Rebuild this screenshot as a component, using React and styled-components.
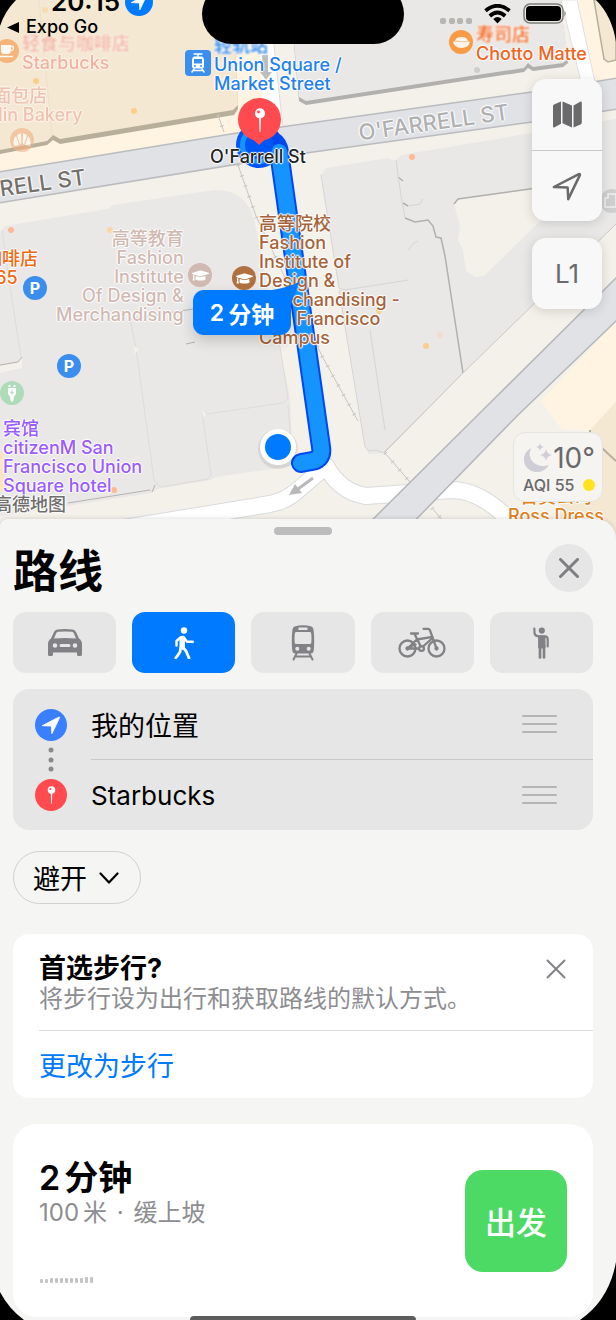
import React from "react";
import styled, { createGlobalStyle, css } from "styled-components";
import { FaGraduationCap } from "react-icons/fa";

const GlobalStyle = createGlobalStyle`
  *, *::before, *::after { box-sizing: border-box; }
  body {
    margin: 0;
    background: #000;
    font-family: Inter, "Noto Sans CJK SC", sans-serif;
    color: #000;
  }
  h1, h2, p, ul, dl { margin: 0; padding: 0; }
  ul { list-style: none; }
  button { font: inherit; border: 0; padding: 0; background: none; color: inherit; cursor: pointer; }
  svg { display: block; flex: none; }
`;

const Screen = styled.div`
  position: relative;
  min-height: 100vh;
  overflow: hidden;
  display: flex;
  flex-direction: column;
  background: #f5f5f4;
`;

/* ---------- map ---------- */

const MapArea = styled.section`
  position: relative;
  height: 540px;
  overflow: hidden;
  background: #f4f1ea;
`;

const MapDrawing = styled.svg`
  position: absolute;
  top: 0;
  left: 0;
`;

const halo = css`
  text-shadow: 0 0 2px #fff, 1px 0 1px #fff, -1px 0 1px #fff, 0 1px 1px #fff, 0 -1px 1px #fff;
`;

const PlaceLabel = styled.div`
  position: absolute;
  left: ${(p) => p.$x}px;
  top: ${(p) => p.$y}px;
  color: ${(p) => p.$color};
  opacity: ${(p) => p.$fade || 1};
  text-align: ${(p) => p.$align || "left"};
  font-size: 18px;
  line-height: 19px;
  font-weight: 500;
  white-space: nowrap;
  ${halo}
`;

const Blurred = styled.span`
  filter: blur(1px);
`;

const StreetLabel = styled.div`
  position: absolute;
  left: ${(p) => p.$x}px;
  top: ${(p) => p.$y}px;
  color: ${(p) => p.$color};
  font-size: 22px;
  line-height: 24px;
  font-weight: 500;
  white-space: nowrap;
  transform: rotate(-8deg);
  ${halo}
`;

const Poi = styled.div`
  position: absolute;
  left: ${(p) => p.$x}px;
  top: ${(p) => p.$y}px;
  width: ${(p) => (p.$square ? 26 : 24)}px;
  height: ${(p) => (p.$square ? 26 : 24)}px;
  border-radius: ${(p) => (p.$square ? 4 : 12)}px;
  display: grid;
  place-items: center;
  background: ${(p) => p.$color};
  opacity: ${(p) => p.$fade || 1};
  color: #fff;
  font-size: 16px;
  font-weight: 700;
`;

const TimeBubble = styled.div`
  position: absolute;
  left: 193px;
  top: 290px;
  width: 98px;
  height: 45px;
  border-radius: 11px;
  display: flex;
  align-items: center;
  justify-content: center;
  background: #007aff;
  color: #fff;
  font-size: 23px;
  font-weight: 600;
  box-shadow: 0 6px 14px rgba(0, 0, 0, 0.16);
`;

const BubbleTail = styled.svg`
  position: absolute;
  right: -9px;
  top: -8px;
`;

/* figure set slightly apart from the unit that follows it */
const Figure = styled.span`
  margin-right: 4px;
`;

const Controls = styled.div`
  position: absolute;
  top: 79px;
  right: 14px;
  display: flex;
  flex-direction: column;
  gap: 17px;
`;

const ControlGroup = styled.div`
  width: 70px;
  border-radius: 14px;
  background: #f8f8f8;
  box-shadow: 0 2px 12px rgba(0, 0, 0, 0.14);
`;

const ControlButton = styled.button`
  width: 100%;
  height: 71px;
  display: grid;
  place-items: center;
  color: #6a6a6c;
  font-size: 26px;
  & + & {
    border-top: 1px solid #c8c8c9;
  }
`;

const Weather = styled.div`
  position: absolute;
  top: 432px;
  right: 13px;
  width: 90px;
  height: 70px;
  padding: 9px 7px 0 9px;
  border-radius: 12px;
  border: 1px solid #e6e4df;
  background: #f6f4f0;
  color: #69696b;
`;

const Temperature = styled.div`
  display: flex;
  align-items: center;
  justify-content: space-between;
  font-size: 28px;
  line-height: 32px;
`;

const AirQuality = styled.div`
  display: flex;
  align-items: center;
  justify-content: space-between;
  font-size: 16px;
  line-height: 22px;
  font-weight: 500;
`;

const AqiDot = styled.span`
  width: 12px;
  height: 12px;
  border-radius: 6px;
  background: #ffe31f;
`;

/* ---------- status bar ---------- */

const StatusLeft = styled.div`
  position: absolute;
  left: 7px;
  top: -15px;
  display: flex;
  flex-direction: column;
`;

const Clock = styled.div`
  display: flex;
  align-items: center;
  gap: 5px;
  padding-left: 44px;
  font-size: 26px;
  line-height: 33px;
  font-weight: 600;
`;

const LocationBadge = styled.span`
  width: 28px;
  height: 28px;
  border-radius: 14px;
  display: grid;
  place-items: center;
  background: #007aff;
`;

const BackToApp = styled.a`
  display: flex;
  align-items: center;
  gap: 7px;
  color: #000;
  font-size: 18px;
  line-height: 18px;
  font-weight: 500;
  text-decoration: none;
`;

const Island = styled.div`
  position: absolute;
  top: -16px;
  left: calc(50% - 106px);
  width: 202px;
  height: 60px;
  border-radius: 30px;
  background: #000;
`;

const StatusRight = styled.div`
  position: absolute;
  top: 3px;
  right: 49px;
  display: flex;
  align-items: center;
  gap: 12px;
`;

/* ---------- sheet ---------- */

const Sheet = styled.main`
  position: relative;
  flex: 1;
  margin-top: -21px;
  padding: 8px 23px 3px 13px;
  border-radius: 8px 20px 0 0;
  background: #f5f5f4;
  box-shadow: 0 0 5px rgba(0, 0, 0, 0.16);
  display: flex;
  flex-direction: column;
`;

const Grabber = styled.div`
  align-self: center;
  width: 58px;
  height: 8px;
  border-radius: 4px;
  background: #bcbcbd;
`;

const SheetHeader = styled.header`
  display: flex;
  align-items: flex-start;
  justify-content: space-between;
  height: 77px;
  padding-top: 9px;
`;

const Title = styled.h1`
  font-size: 45px;
  line-height: 56px;
  font-weight: 700;
`;

const CloseButton = styled.button`
  width: 48px;
  height: 48px;
  border-radius: 24px;
  display: grid;
  place-items: center;
  background: #e6e6e6;
  color: #7f7f83;
`;

const Modes = styled.div`
  display: grid;
  grid-template-columns: repeat(5, 1fr);
  gap: 16px;
  margin-bottom: 16px;
`;

const ModeButton = styled.button`
  height: 61px;
  border-radius: 13px;
  display: grid;
  place-items: center;
  background: ${(p) => (p.$active ? "#007aff" : "#e6e6e6")};
  color: ${(p) => (p.$active ? "#fff" : "#828286")};
`;

const Stops = styled.ul`
  position: relative;
  border-radius: 16px;
  background: #e6e6e6;
  margin-bottom: 21px;
`;

const Stop = styled.li`
  display: flex;
  align-items: center;
  gap: 24px;
  padding-left: 22px;
`;

const StopBadge = styled.span`
  width: 32px;
  height: 32px;
  border-radius: 16px;
  display: grid;
  place-items: center;
  background: ${(p) => p.$color};
`;

const StopBody = styled.div`
  flex: 1;
  display: flex;
  align-items: center;
  justify-content: space-between;
  height: ${(p) => (p.$divided ? 71 : 70)}px;
  padding-right: 36px;
  border-bottom: ${(p) => (p.$divided ? "1px solid #c9c9ca" : "0")};
`;

const StopName = styled.span`
  font-size: 27px;
  &:lang(en) {
    font-size: 26px;
  }
`;

const StopLink = styled.svg`
  position: absolute;
  left: 22px;
  top: 58px;
`;

const DragHandle = styled.button`
  width: 35px;
  height: 18px;
  display: flex;
  flex-direction: column;
  justify-content: space-between;
`;

const DragLine = styled.span`
  height: 2px;
  border-radius: 1px;
  background: #b5b5b7;
`;

const AvoidButton = styled.button`
  align-self: flex-start;
  display: flex;
  align-items: center;
  gap: 12px;
  height: 53px;
  padding: 0 21px 0 19px;
  border: 1px solid #d0d0d2;
  border-radius: 27px;
  font-size: 27px;
  margin-bottom: 30px;
`;

const Card = styled.section`
  border-radius: 16px;
  background: #fff;
  padding-left: 26px;
  margin-bottom: ${(p) => p.$gap}px;
`;

const TipTop = styled.div`
  display: flex;
  justify-content: space-between;
  align-items: flex-start;
  height: 97px;
  padding: 18px 27px 0 0;
  border-bottom: 1px solid #dcdcde;
`;

const TipTitle = styled.h2`
  font-size: 27px;
  line-height: 33px;
  font-weight: 700;
`;

const Muted = styled.p`
  color: #8d8d91;
  font-size: 24px;
  line-height: 28px;
`;

const Separator = styled.span`
  margin: 0 3px;
`;

const DismissButton = styled.button`
  width: 20px;
  height: 20px;
  margin-top: 7px;
  color: #828286;
`;

const TipAction = styled.button`
  height: 67px;
  color: #007aff;
  font-size: 27px;
`;

const RouteCard = styled(Card)`
  display: flex;
  justify-content: space-between;
  align-items: center;
  height: 193px;
  padding-right: 26px;
  border-radius: 24px;
`;

const RouteInfo = styled.div`
  display: flex;
  flex-direction: column;
  height: 100%;
  padding: 32px 0 34px;
`;

const Duration = styled.h2`
  font-size: 34px;
  line-height: 43px;
  font-weight: 600;
`;

const Elevation = styled.div`
  display: flex;
  gap: 2px;
  align-items: flex-end;
  margin: auto 0 0 1px;
`;

const ElevationBar = styled.span`
  width: 3px;
  height: ${(p) => p.$h}px;
  border-radius: 1px;
  background: #c4c4c6;
`;

const GoButton = styled.button`
  width: 102px;
  height: 102px;
  border-radius: 18px;
  background: #4cd964;
  color: #fff;
  font-size: 31px;
  font-weight: 500;
`;

const HomeBar = styled.div`
  position: absolute;
  left: calc(50% - 118px);
  bottom: 0;
  width: 226px;
  height: 4px;
  border-radius: 4px 4px 0 0;
  background: #5c5c5c;
`;

const Corner = styled.svg`
  position: absolute;
  pointer-events: none;
  ${(p) => p.$v}: 0;
  ${(p) => p.$h}: 0;
`;

/* ---------- drawings ---------- */

const Arrow = ({ size, fill = "none", stroke = "none", strokeWidth = 0 }) => (
  <svg width={size} height={size} viewBox="0 0 24 24" fill={fill} stroke={stroke} strokeWidth={strokeWidth} strokeLinejoin="round">
    <path d="M1.500 12.800 21.500 2.500Q22.500 2.300 22.300 3.300L13 22.500 12.500 13.200Z" />
  </svg>
);

const MapIcon = () => (
  <svg width="29" height="27" viewBox="0 0 29 27" fill="currentColor">
    <path d="M0 5Q0 4 1 3.500L8 .4V22.800L1.600 26.200Q0 27 0 25.400ZM9.500 .4 19 4.400V26.400L9.500 22.200ZM20.500 4.400 27.200.800Q28.800 0 28.800 1.800V21.600Q28.800 22.800 28 23.200L20.500 26.500Z" />
  </svg>
);

const Cross = ({ size, width }) => (
  <svg width={size} height={size} viewBox="0 0 20 20" fill="none" stroke="currentColor" strokeWidth={width} strokeLinecap="round">
    <path d="M1.500 1.500 18.500 18.500M18.500 1.500 1.500 18.500" />
  </svg>
);

const CarIcon = () => (
  <svg width="34" height="27" viewBox="0 0 34 27" fill="currentColor" fillRule="evenodd">
    <path d="M3 9.500 6 3Q7 .8 9.500.500Q17-.300 24.500.500Q27 .8 28 3L31 9.500Q34 11.500 34 15V25.500Q34 27 32.500 27H30.500Q29 27 29 25.500V23.500H5V25.500Q5 27 3.500 27H1.500Q0 27 0 25.500V15Q0 11.500 3 9.500ZM6 9.500Q17 8.300 28 9.500L25.800 4.200Q25.300 3 24 2.800Q17 2.200 10 2.800Q8.700 3 8.200 4.200ZM7 14.200A2.300 2.300 0 1 0 7 18.800A2.300 2.300 0 1 0 7 14.200ZM27 14.200A2.300 2.300 0 1 0 27 18.800A2.300 2.300 0 1 0 27 14.200ZM13 15A1.500 1.500 0 0 0 13 18H21A1.500 1.500 0 0 0 21 15Z" />
  </svg>
);

const WalkIcon = () => (
  <svg width="20" height="32" viewBox="0 0 20 32" fill="none" stroke="currentColor" strokeLinecap="round" strokeLinejoin="round">
    <circle cx="10" cy="3.500" r="3.200" fill="currentColor" stroke="none" />
    <path d="M8.200 11.500V20" strokeWidth="5.500" />
    <path d="M6.500 10.500 2.500 14V18.500M9.500 10 13 14.800H18.800" strokeWidth="2.400" />
    <path d="M9 20.500 12 24 15 31M6.600 21 6 25 1.800 31" strokeWidth="2.800" />
  </svg>
);

const TrainIcon = () => (
  <svg width="24" height="36" viewBox="0 0 24 36" fill="currentColor" fillRule="evenodd">
    <path d="M3.500 1.500Q12-1 20.500 1.500Q22.300 2.200 22.600 5Q23.700 15 22.800 25Q22.500 28.500 19.500 28.500H4.500Q1.500 28.500 1.200 25Q.300 15 1.400 5Q1.700 2.200 3.500 1.500ZM7.500 2.600V5H16.500V2.600ZM5 7Q4 7 3.800 8.500Q3.300 13 3.700 17.500Q3.800 19 5 19H19Q20.200 19 20.300 17.500Q20.700 13 20.200 8.500Q20 7 19 7ZM6.300 21.700A2 2 0 1 0 6.300 25.700A2 2 0 1 0 6.300 21.700ZM17.700 21.700A2 2 0 1 0 17.700 25.700A2 2 0 1 0 17.700 21.700Z" />
    <path d="M5.500 28.500 2.500 34.500M18.500 28.500 21.500 34.500M4.500 31.500H19.500" fill="none" stroke="currentColor" strokeWidth="2" strokeLinecap="round" />
  </svg>
);

const BikeIcon = () => (
  <svg width="48" height="31" viewBox="0 0 48 31" fill="none" stroke="currentColor" strokeWidth="2.300" strokeLinecap="round" strokeLinejoin="round">
    <circle cx="9.500" cy="21.500" r="8" />
    <circle cx="38.500" cy="21.500" r="8" />
    <circle cx="9.500" cy="21.500" r="1" fill="currentColor" />
    <circle cx="38.500" cy="21.500" r="1" fill="currentColor" />
    <circle cx="23.500" cy="21.500" r="2.400" />
    <path d="M13 6.500H20M16.300 6.500 22.800 19.500M9.500 21.500 18.800 12.500 34.500 9.800M9.500 21.500H21M10 20.500 17.500 17.500M25 19.500 34 11.500M25.500 1.800H30Q31.500 1.800 32 3.300L38.500 21.500" />
  </svg>
);

const HailIcon = () => (
  <svg width="16" height="32" viewBox="0 0 16 32" fill="none" stroke="currentColor" strokeLinecap="round" strokeLinejoin="round">
    <circle cx="8.800" cy="3.600" r="3.100" fill="currentColor" stroke="none" />
    <path d="M1.300 1.500 1.600 6.500Q2 9 6.500 9.400H12Q14.500 9.600 14.700 12V19.500" strokeWidth="2.200" />
    <path d="M6 9H12V21H6Z" fill="currentColor" strokeWidth="1" />
    <path d="M7 18V30.500M11 18V30.500" strokeWidth="2.700" />
  </svg>
);

const PinGlyph = ({ height }) => (
  <svg width={height / 2} height={height} viewBox="0 0 10 20">
    <path d="M4.200 8H5.800L5.400 19.500Q5 20.500 4.600 19.500Z" fill="#fff" />
    <circle cx="5" cy="4.500" r="4.200" fill="#fff" />
    <circle cx="3.800" cy="3.300" r="1.200" fill="#ff4b50" />
  </svg>
);

const TramGlyph = () => (
  <svg width="16" height="20" viewBox="0 0 16 20" fill="none" stroke="#fff" strokeWidth="1.500" strokeLinecap="round">
    <path d="M4 1H12M8 1V4M4 16 2 19M12 16 14 19M4 17.500H12" />
    <path fill="#fff" stroke="none" fillRule="evenodd" d="M4 3.500H12Q14 4 14 7V13Q14 15.500 11.500 15.500H4.500Q2 15.500 2 13V7Q2 4 4 3.500ZM4 6V10.500H12V6ZM5 12A1 1 0 1 0 5 14A1 1 0 1 0 5 12ZM11 12A1 1 0 1 0 11 14A1 1 0 1 0 11 12Z" />
  </svg>
);

const CupGlyph = () => (
  <svg width="15" height="14" viewBox="0 0 15 14" fill="#fff">
    <path d="M1 1H11V6Q11 10 7.500 10H4.500Q1 10 1 6Z" />
    <path d="M11 2.500H13Q14.500 5 11 7M0 12.500H13" fill="none" stroke="#fff" strokeWidth="1.300" />
  </svg>
);

const BowlGlyph = () => (
  <svg width="17" height="11" viewBox="0 0 17 11" fill="#fff">
    <path d="M2 4Q3 0 8.500 0Q14 0 15 4ZM0 4.500H17Q16 11 8.500 11Q1 11 0 4.500Z" opacity=".9" />
  </svg>
);

const CroissantGlyph = () => (
  <svg width="18" height="14" viewBox="0 0 18 14" fill="#fff">
    <path d="M1 13Q-1 6 3 3L6 12ZM4 2.500Q6 0 8 .500L8.300 10 7 11.500ZM10 .500Q12 0 14 2.500L11 11.500 9.700 10ZM15 3Q19 6 17 13L12 12Z" />
  </svg>
);

const PlugGlyph = () => (
  <svg width="10" height="17" viewBox="0 0 10 17" fill="#fff">
    <path d="M1.500 0H3.500V2H1.500ZM6.500 0H8.500V2H6.500ZM1 3H9V8Q9 10.500 7 11.500L6.300 16Q5 17.500 3.700 16L3 11.500Q1 10.500 1 8Z" />
    <path d="M5.800 4 3 8H4.700L4.200 10.500 7 7H5.300Z" fill="#aedcb9" />
  </svg>
);

const MoonIcon = () => (
  <svg width="29" height="30" viewBox="0 0 29 30" fill="#cfced6">
    <path d="M8 5Q4 14 11 20Q17 25 26 22Q21 30 12 29Q2 27 1 18Q0 9 8 5Z" />
    <path d="M17 0Q17.500 3.500 21 4Q17.500 4.500 17 8Q16.500 4.500 13 4Q16.500 3.500 17 0ZM23 6Q23.700 11 29 12Q23.700 13 23 18Q22.300 13 17 12Q22.300 11 23 6Z" />
  </svg>
);

const WifiIcon = () => (
  <svg width="27" height="20" viewBox="0 0 27 20" fill="none" stroke="#000" strokeWidth="3.800">
    <path d="M1.500 6.800Q13.500-3.200 25.500 6.800M5.800 12Q13.500 5 21.200 12" />
    <path d="M9.300 15Q13.500 11.200 17.700 15L13.500 19.500Z" fill="#000" stroke="none" />
  </svg>
);

const BatteryIcon = () => (
  <svg width="44" height="22" viewBox="0 0 44 22">
    <rect x="1" y="1" width="39" height="19" rx="6" fill="none" stroke="#7e7c78" strokeWidth="1.500" />
    <rect x="3" y="3" width="35" height="15" rx="4" />
    <path d="M41.500 7.500Q44 10.500 41.500 13.500Z" fill="#7e7c78" />
  </svg>
);

const SignalDots = () => (
  <svg width="32" height="20" viewBox="0 0 32 20" fill="#b8b6b3">
    {[0, 9, 17, 26].map((x) => (
      <rect key={x} x={x} y="14" width="6" height="6" rx="2" />
    ))}
  </svg>
);

const Streets = () => (
  <MapDrawing width="616" height="540" viewBox="0 0 616 540" aria-hidden="true">
    {/* shopping district, north-west */}
    <path d="M0 0H262L264 130 0 175Z" fill="#fef4e1" />
    <path d="M0 0H233L238 109 234 115 60 144 53 140 47 145 0 154Z" fill="#b8af9b" />
    <path d="M0 0H233L238 105 233 110 60 139 53 135 47 141 0 150Z" fill="#f4e8d3" />
    <path d="M39 0 52 135" stroke="#ece0c9" />
    {/* white side streets on the north side */}
    <path d="M257 0H269L283 130 265 132Z" fill="#fff" />
    <path d="M269 0 283 128" stroke="#dddcd9" />
    <path d="M262 55H268V72H272L266 80 260 72H263Z" fill="#bdbdbd" />
    <path d="M290 0H560L568 63 563 67 533 71 528 68 524 72 306 105 299 101Z" fill="#b1b0ae" />
    <path d="M290 0H560L568 59 563 63 533 67 528 63 524 68 306 101 299 97Z" fill="#e9e8e7" />
    <path d="M561 0H577L595 82H581Z" fill="#fff" stroke="#e1e0de" />
    <path d="M578 0H616V84H596Z" fill="#fef4e1" />
    <path d="M594 0 604 59 608 62 616 60V0Z" fill="#f4e8d3" stroke="#b8af9b" strokeWidth="1.500" />

    {/* west block */}
    <path d="M0 233 5 226 108 209 113 205 215 190Q246 190 254 219L290 398 293 466 215 477 211 480 158 489 152 493 0 516Z" fill="#e9e8e7" />
    <path d="M0 366 18 362 22 357V368L0 373Z" fill="#f4f1ea" />
    <path d="M0 365 18 362 22 357M152 492 155 485M68 503 150 490M130 319 193 309M186 344 195 342" fill="none" stroke="#b4b3b1" />
    <path d="M2 230Q10 290 21 356M130 319 136 348 154 480 160 487 208 479 211 474 202 412 207 414 283 403 288 398 278 335M288 405 293 466" fill="none" stroke="#dddcd9" />
    <path d="M134 346 139 349 135 354ZM202 410 206 414 203 418Z" fill="#f4f1ea" />
    <path d="M0 450 4 455V490L0 492Z" fill="#fbe5c2" />

    {/* middle block */}
    <path d="M321 175 326 168 388 158 395 161 401 155 616 119V236L463 373 384 453 369 454 365 447 339 288Z" fill="#e9e8e7" />
    <path d="M454 204 459 199 580 182 484 276 475 277 466 271 463 250 458 240 460 226Z" fill="#f4f1ea" />
    <path d="M454 204 458 199 580 182M398 177 403 181M403 203 408 206M405 218 415 222 428 220 433 226 436 237 441 238 445 256 463 373" fill="none" stroke="#b1b0ae" strokeWidth="1.500" />
    <path d="M321 175 339 288 345 290 408 280M339 290 365 447 369 451 376 450 384 453M396 160 401 196 405 218M408 206 420 204 423 199M408 250 414 243 418 241M384 452 463 373M370 330 385 430" fill="none" stroke="#d6d5d3" />
    <path d="M463 373 616 224V236L484 354Z" fill="#f4f1ea" />

    {/* south-east corner */}
    <path d="M463 373 616 224V540H300L384 453Z" fill="#f4f1ea" />
    <path d="M384 453 463 373 616 224" fill="none" stroke="#c9c8c5" />
    <path d="M541 401 616 322V402L590 430H562Z" fill="#fef4e1" />
    <path d="M590 430 616 402V540H560L560 500 590 500Z" fill="#f4e8d3" />
    <path d="M602 448 616 461M590 430V440" stroke="#b8af9b" strokeWidth="2" />

    {/* white streets along the south */}
    <g fill="none" strokeLinejoin="round">
      <path d="M100 532 270 504Q286 501 298 490L326 466Q340 492 366 496L452 490Q486 490 524 536" stroke="#d9dbdc" strokeWidth="18" />
      <path d="M100 532 270 504Q286 501 298 490L326 466Q340 492 366 496L452 490Q486 490 524 536" stroke="#fff" strokeWidth="16" />
    </g>
    <path d="M313 478 298 489" stroke="#b9b9b9" strokeWidth="3" />
    <path d="M289 495 295 484 302 493Z" fill="#b9b9b9" />

    {/* main roads */}
    <path d="M-2 172 237 133 532 92 618 78V109L532 122 306 153 -2 203Z" fill="#e0e2e6" stroke="#b9bbbe" strokeWidth="1.500" />
    <path d="M352 540 496 397 618 276V319L518 415 396 540Z" fill="#e0e2e6" stroke="#b4b6ba" strokeWidth="1.500" />

    {/* tram line */}
    <g fill="none" stroke="#c6c5c2">
      <path d="M218 115 224 132M238 165 256 216 322 356 358 421M385 453 410 482M432 508 444 522" />
      <path d="M218 115 224 132M238 165 256 216 322 356 358 421M385 453 410 482M432 508 444 522" strokeWidth="4" strokeDasharray="1 10" />
    </g>

    {/* small place dots */}
    {[
      [36, 81, "#fbcf8b"], [134, 111, "#fbcf8b"], [11, 230, "#fdba94"], [110, 230, "#fbd6a1"],
      [412, 157, "#fdba94"], [477, 70, "#cfcecd"], [379, 311, "#fbcf8b"], [426, 346, "#fbcf8b"],
      [440, 335, "#f1ddd0"], [114, 490, "#fdb98f"], [45, 10, "#f8dcae"],
    ].map(([x, y, c]) => (
      <circle key={`${x}-${y}`} cx={x} cy={y} r="3" fill={c} />
    ))}
    <circle cx="612" cy="201" r="12" fill="#cfcfcf" />
    <path d="M605 207V198H608V194H616V207Z" fill="none" stroke="#f1f1f1" strokeWidth="1.500" />

    {/* walking route */}
    <circle cx="259" cy="145" r="23" fill="#0056f5" />
    <circle cx="259" cy="145" r="16" fill="none" stroke="#1593ff" strokeWidth="6" />
    <g fill="none" strokeLinecap="round" strokeLinejoin="round">
      <path d="M262 141Q276 137 279 152L321 447Q323 459 312 461L301 463" stroke="#0047f0" strokeWidth="20" />
      <path d="M279 152 321 447Q323 459 312 461L301 463" stroke="#1593ff" strokeWidth="16" />
    </g>
    <circle cx="259" cy="145" r="14" fill="#0056f5" />
  </MapDrawing>
);

const Markers = styled.svg`
  position: absolute;
  left: 0;
  top: 0;
`;

const DestinationPin = styled.div`
  position: absolute;
  left: 238px;
  top: 98px;
  width: 43px;
  height: 43px;
  border-radius: 22px;
  display: grid;
  place-items: center;
  background: #ff4b50;
`;

const modes = [
  ["驾车", <CarIcon />],
  ["步行", <WalkIcon />],
  ["公共交通", <TrainIcon />],
  ["骑行", <BikeIcon />],
  ["打车", <HailIcon />],
];

const Handle = () => (
  <DragHandle aria-label="重新排序">
    <DragLine />
    <DragLine />
    <DragLine />
  </DragHandle>
);

export default function App() {
  return (
    <Screen>
      <GlobalStyle />
      <MapArea aria-label="地图">
        <Streets />

        <Poi $x={-5} $y={39} $color="#f7a35c" $fade={0.75}><CupGlyph /></Poi>
        <PlaceLabel $x={22} $y={34} $color="#f08d7c" $fade={0.6}><Blurred>轻食与咖啡店</Blurred><br />Starbucks</PlaceLabel>
        <PlaceLabel $x={-42} $y={86} $color="#eda292" $fade={0.55} $align="center">面包店<br />Boudin Bakery</PlaceLabel>
        <Poi $x={10} $y={128} $color="#f3b184" $fade={0.6}><CroissantGlyph /></Poi>

        <Poi $x={185} $y={50} $color="#3a8eee" $square><TramGlyph /></Poi>
        <PlaceLabel $x={214} $y={36} $color="#2381ea"><Blurred>轻轨站</Blurred><br />Union Square /<br />Market Street</PlaceLabel>

        <Poi $x={449} $y={30} $color="#f99b45"><BowlGlyph /></Poi>
        <PlaceLabel $x={476} $y={25} $color="#f0641e"><Blurred>寿司店</Blurred><br />Chotto Matte</PlaceLabel>

        <StreetLabel $x={358} $y={110} $color="#b0b0b1">O'FARRELL ST</StreetLabel>
        <StreetLabel $x={-65} $y={175} $color="#74716c">O'FARRELL ST</StreetLabel>

        <PlaceLabel $x={-16} $y={249} $color="#f06a12">咖啡店<br />365</PlaceLabel>
        <Poi $x={23} $y={276} $color="#3a8eee">P</Poi>
        <Poi $x={57} $y={354} $color="#3a8eee">P</Poi>
        <Poi $x={0} $y={381} $color="#aedcb9"><PlugGlyph /></Poi>

        <PlaceLabel $x={56} $y={229} $color="#d0b9b1" $align="right">
          高等教育<br />Fashion<br />Institute<br />Of Design &amp;<br />Merchandising
        </PlaceLabel>
        <Poi $x={188} $y={263} $color="#d0b9b1"><FaGraduationCap size={17} /></Poi>
        <Poi $x={232} $y={266} $color="#b1703f"><FaGraduationCap size={17} /></Poi>
        <PlaceLabel $x={259} $y={214} $color="#a5633a">
          高等院校<br />Fashion<br />Institute of<br />Design &amp;<br />Merchandising -<br />San Francisco<br />Campus
        </PlaceLabel>

        <PlaceLabel $x={3} $y={419} $color="#9a5bff">
          宾馆<br />citizenM San<br />Francisco Union<br />Square hotel
        </PlaceLabel>
        <PlaceLabel $x={-6} $y={495} $color="#6f6e6c">高德地图</PlaceLabel>
        <PlaceLabel $x={508} $y={487} $color="#df8220" $align="center">百货公司<br />Ross Dress</PlaceLabel>

        <Markers width="616" height="540" viewBox="0 0 616 540" aria-hidden="true">
          <circle cx="278" cy="449" r="20" fill="#000" opacity=".08" />
          <circle cx="278" cy="447" r="18" fill="#fff" />
          <circle cx="278" cy="447" r="13" fill="#007aff" />
          <path d="M248 135 259 145 270 135Z" fill="#ff4b50" />
        </Markers>
        <DestinationPin><PinGlyph height={24} /></DestinationPin>
        <PlaceLabel $x={210} $y={147} $color="#222">O'Farrell St</PlaceLabel>
        <TimeBubble>
          <BubbleTail width="28" height="22" viewBox="0 0 28 22"><path d="M0 8Q14 6 27 0L19 22Z" fill="#007aff" /></BubbleTail>
          <Figure>2</Figure>分钟
        </TimeBubble>

        <Controls>
          <ControlGroup>
            <ControlButton aria-label="地图样式"><MapIcon /></ControlButton>
            <ControlButton aria-label="定位"><Arrow size={30} stroke="#6a6a6c" strokeWidth={2} /></ControlButton>
          </ControlGroup>
          <ControlGroup>
            <ControlButton aria-label="楼层 L1">L1</ControlButton>
          </ControlGroup>
        </Controls>
        <Weather>
          <Temperature><MoonIcon />10°</Temperature>
          <AirQuality>AQI 55<AqiDot /></AirQuality>
        </Weather>

        <StatusLeft>
          <Clock>20:15<LocationBadge><Arrow size={18} fill="#fff" stroke="#fff" strokeWidth={1} /></LocationBadge></Clock>
          <BackToApp href="#">
            <svg width="12" height="11" viewBox="0 0 12 11"><path d="M12 0V11L0 5.500Z" /></svg>
            Expo Go
          </BackToApp>
        </StatusLeft>
        <Island />
        <StatusRight>
          <SignalDots />
          <WifiIcon />
          <BatteryIcon />
        </StatusRight>
      </MapArea>

      <Sheet>
        <Grabber />
        <SheetHeader>
          <Title>路线</Title>
          <CloseButton aria-label="关闭"><Cross size={20} width={3} /></CloseButton>
        </SheetHeader>

        <Modes>
          {modes.map(([label, icon]) => (
            <ModeButton key={label} aria-label={label} $active={label === "步行"}>{icon}</ModeButton>
          ))}
        </Modes>

        <Stops>
          <Stop>
            <StopBadge $color="#3a7fff"><Arrow size={20} fill="#fff" stroke="#fff" strokeWidth={1} /></StopBadge>
            <StopBody $divided><StopName>我的位置</StopName><Handle /></StopBody>
          </Stop>
          <Stop>
            <StopBadge $color="#ff4b50"><PinGlyph height={18} /></StopBadge>
            <StopBody><StopName lang="en">Starbucks</StopName><Handle /></StopBody>
          </Stop>
          <StopLink width="32" height="26" viewBox="0 0 32 26" fill="#8a8a8e" aria-hidden="true">
            <circle cx="16" cy="3" r="2.500" />
            <circle cx="16" cy="13" r="2.500" />
            <circle cx="16" cy="22" r="2.500" />
          </StopLink>
        </Stops>

        <AvoidButton>
          避开
          <svg width="20" height="12" viewBox="0 0 20 12" fill="none" stroke="#000" strokeWidth="2.200" strokeLinecap="round" strokeLinejoin="round">
            <path d="M1.500 1.500 10 10.500 18.500 1.500" />
          </svg>
        </AvoidButton>

        <Card $gap={26}>
          <TipTop>
            <div>
              <TipTitle>首选步行?</TipTitle>
              <Muted>将步行设为出行和获取路线的默认方式。</Muted>
            </div>
            <DismissButton aria-label="忽略"><Cross size={20} width={2} /></DismissButton>
          </TipTop>
          <TipAction>更改为步行</TipAction>
        </Card>

        <RouteCard $gap={0}>
          <RouteInfo>
            <Duration><Figure>2</Figure>分钟</Duration>
            <Muted><Figure>100</Figure>米 <Separator>·</Separator> 缓上坡</Muted>
            <Elevation aria-hidden="true">
              {[4, 4, 5, 5, 5, 5, 5, 5, 5, 6, 6].map((h, i) => (
                <ElevationBar key={i} $h={h} />
              ))}
            </Elevation>
          </RouteInfo>
          <GoButton>出发</GoButton>
        </RouteCard>
      </Sheet>

      <HomeBar />
      <Corner $v="top" $h="left" width="16" height="26" viewBox="0 0 16 26"><path d="M0 0H16Q5 11 0 26Z" /></Corner>
      <Corner $v="top" $h="right" width="20" height="42" viewBox="0 0 20 42"><path d="M0 0H20V42Q16 16 0 0Z" /></Corner>
      <Corner $v="bottom" $h="left" width="24" height="28" viewBox="0 0 24 28"><path d="M0 0Q9 17 24 28H0Z" /></Corner>
      <Corner $v="bottom" $h="right" width="36" height="58" viewBox="0 0 36 58"><path d="M36 0V58H0Q29 38 36 0Z" /></Corner>
    </Screen>
  );
}
